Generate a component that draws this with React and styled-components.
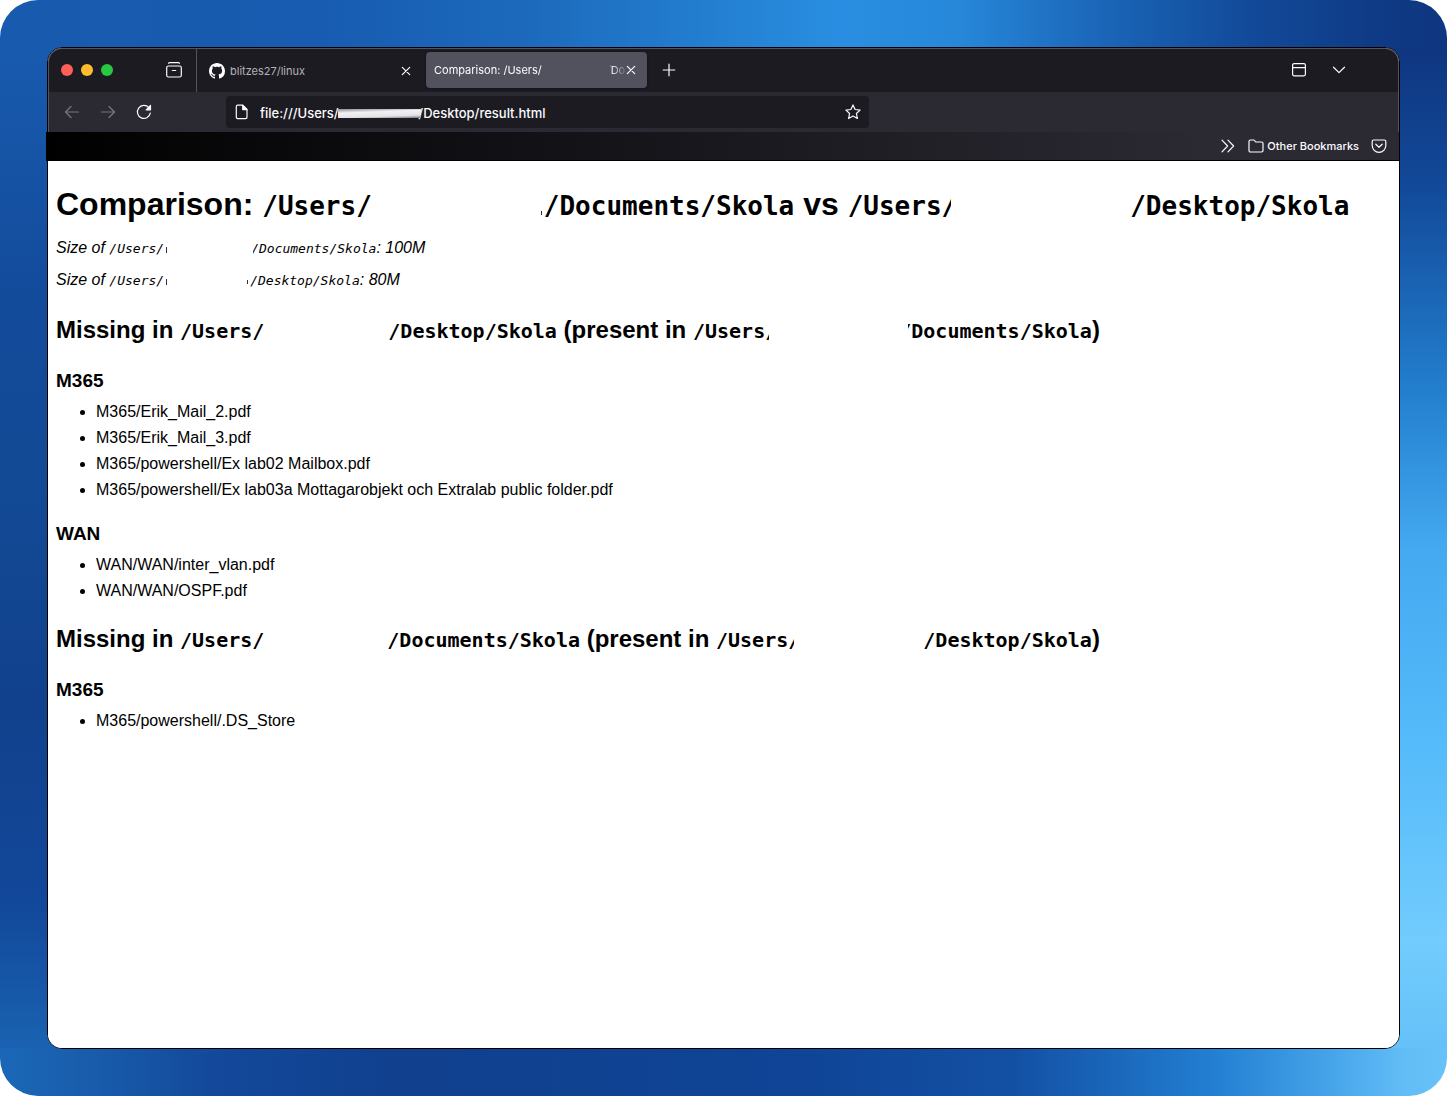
import React from "react";
import styled, { createGlobalStyle, css } from "styled-components";

const GlobalStyle = createGlobalStyle`
  *, *::before, *::after { box-sizing: border-box; }
  body { margin: 0; background: #fff; }
`;

const uiFont = `Inter, "Liberation Sans", sans-serif`;

const Wallpaper = styled.div`
  display: flex;
  min-height: 100vh;
  padding: 47px;
  border-radius: 38px;
  background:
    linear-gradient(90deg, #185aae 0%, #175cb0 22%, #1c69bb 36%, #2480d2 50%, #298ee1 58%, #2788da 66%, #1b66b8 76%, #124b9a 86%, #0f3a85 95%, #0f3680 100%) top / 100% 48px no-repeat,
    linear-gradient(90deg, #1b67b7 0%, #195fae 5%, #13489a 15%, #10408e 28%, #0f4496 55%, #1350a4 70%, #1a67bb 77%, #237fd2 84%, #46a4ea 92%, #62bdf6 97%, #66c2f8 100%) bottom / 100% 48px no-repeat,
    linear-gradient(180deg, #185aae 0%, #185aae 5%, #134b9b 27%, #134a95 45%, #11418c 64%, #124799 82%, #1a63b2 96%, #1a63b2 100%) left / 50% 100% no-repeat,
    linear-gradient(180deg, #0f3680 0%, #0f3781 5%, #124999 17%, #1a63b3 26%, #2380cf 36%, #44a9f0 50%, #55bbfa 68%, #72ccfd 86%, #64c0f7 96%, #64c0f7 100%) right / 50% 100% no-repeat;
`;

const Window = styled.div`
  flex: 1;
  min-width: 0;
  display: flex;
  flex-direction: column;
  border: 1px solid #000;
  border-radius: 15px;
  background: #fff;
`;

const TabBar = styled.header`
  display: flex;
  align-items: stretch;
  height: 44px;
  background: #1c1b22;
  border: 1px solid #55545c;
  border-bottom: 0;
  border-radius: 14px 14px 0 0;
  font-family: ${uiFont};
  font-size: 11px;
  color: #fbfbfe;
`;

const Lights = styled.div`
  display: flex;
  align-items: center;
  gap: 8px;
  padding: 0 38px 2px 12px;
`;

const Light = styled.button`
  width: 12px;
  height: 12px;
  padding: 0;
  border: 0;
  border-radius: 50%;
  background: ${(p) => p.$color};
`;

const IconButton = styled.button`
  flex: none;
  display: flex;
  align-items: center;
  justify-content: center;
  width: ${(p) => p.$width || 36}px;
  padding: 0;
  border: 0;
  background: none;
  color: ${(p) => (p.$dim ? "#77767d" : "#fbfbfe")};

  ${TabBar} > & { padding-bottom: 2px; }
`;

const Tab = styled.div`
  display: flex;
  align-items: center;
  gap: 5px;
  ${(p) =>
    p.$active
      ? css`
          width: 221px;
          margin: 3px 4px 4px 0;
          padding: 0 4px 0 8px;
          border-radius: 4px;
          background: #52525e;
          box-shadow: 0 0 3px rgba(0, 0, 0, 0.5);
        `
      : css`
          width: 230px;
          padding: 0 8px 0 12px;
          border-left: 1px solid #55545c;
          color: #b4b3b9;
        `}
`;

const TabTitle = styled.span`
  flex: 1;
  min-width: 0;
  overflow: hidden;
  white-space: nowrap;
  line-height: 16px;
`;

const FadedTitle = styled(TabTitle)`
  margin-right: -12px;
  mask-image: linear-gradient(90deg, #000 92%, rgba(0, 0, 0, 0.2) 99%);
`;

const TabGap = styled.span`
  position: relative;
  display: inline-block;
  width: 68px;
  height: 16px;
  margin-right: -3px;
  vertical-align: top;
  background: #52525e;
`;

const Spacer = styled.div`
  flex: 1;
`;

const NavBar = styled.nav`
  display: flex;
  align-items: center;
  height: 40px;
  padding: 0 5px;
  background: #2b2a33;
  border: solid #55545c;
  border-width: 0 1px;
`;

const AddressBar = styled.form`
  position: relative;
  display: flex;
  align-items: center;
  flex: 0 1 643px;
  height: 32px;
  margin-left: 64px;
  padding-left: 8px;
  border-radius: 4px;
  background: #1c1b22;
  color: #fbfbfe;
`;

const AddressInput = styled.input`
  flex: 1;
  min-width: 0;
  margin-left: 10px;
  padding: 2px 0 0;
  border: 0;
  outline: 0;
  background: none;
  color: inherit;
  font-family: ${uiFont};
  font-size: 13px;
  font-weight: 500;
  line-height: 20px;
`;

const AddressSmudge = styled.span`
  position: absolute;
  left: 112px;
  top: 13px;
  width: 83px;
  height: 9px;
  background: linear-gradient(178deg, #8d8c92 0%, #f1f1f4 35%, #e4e4e8 75%, #77767d 100%);
`;

const BookmarksBar = styled.div`
  display: flex;
  align-items: center;
  height: 29px;
  margin-left: -2px;
  padding-right: 6px;
  border-bottom: 1px solid #000;
  background: linear-gradient(90deg, #000 0%, #050506 8%, #141318 40%, #212027 65%, #2b2a33 86%);
  color: #fbfbfe;
`;

const BookmarkFolder = styled.button`
  display: flex;
  align-items: center;
  gap: 3px;
  padding: 0 6px;
  border: 0;
  background: none;
  color: inherit;
  font-family: ${uiFont};
  font-size: 11px;
  font-weight: 500;
  line-height: 16px;
`;

const Page = styled.main`
  flex: 1;
  padding: 19px 8px 8px;
  border-radius: 0 0 14px 14px;
  background: #fff;
  color: #000;
  font-family: "Liberation Sans", Arial, sans-serif;
  font-size: 16px;
  line-height: 26px;
`;

const Title = styled.h1`
  margin: 0 0 4px;
  font-size: 32px;
  line-height: 48px;
`;

const SizeLine = styled.p`
  margin: 0;
  font-style: italic;
  line-height: 32px;
`;

const SectionTitle = styled.h2`
  margin: 18px 0 23px;
  font-size: 24px;
  line-height: 32px;
`;

const GroupTitle = styled.h3`
  margin: 0;
  font-size: 19px;
  line-height: 24px;
`;

const FileList = styled.ul`
  margin: 6px 0 19px;
  padding-left: 40px;
`;

const Path = styled.code`
  font-family: "DejaVu Sans Mono", monospace;
  font-size: 13px;
  line-height: 1;

  ${Title} & { font-size: 26px; }
  ${SectionTitle} & { font-size: 20px; }
`;

/* White block hiding the user name; it may bite into the letters beside it,
   and may leave a speck of the hidden name at either end. */
const Redaction = styled.span`
  position: relative;
  display: inline-block;
  width: ${(p) => p.$width}px;
  height: 1em;
  margin-left: ${(p) => -(p.$biteLeft || 0)}px;
  margin-right: ${(p) => -(p.$biteRight || 0)}px;
  vertical-align: text-bottom;
  background: #fff;

  &::before,
  &::after {
    position: absolute;
    bottom: 3px;
    width: 1px;
    background: #333;
  }
  &::before {
    content: ${(p) => (p.$speckLeft ? '""' : "none")};
    left: 2px;
    height: 6px;
  }
  &::after {
    content: ${(p) => (p.$speckRight ? '""' : "none")};
    right: 2px;
    bottom: ${(p) => p.$speckRight}px;
    height: 4px;
  }
`;

const Icon = ({ size = 16, children }) => (
  <svg width={size} height={size} viewBox="0 0 16 16" fill="none" stroke="currentColor" strokeWidth="1.2" strokeLinecap="round" strokeLinejoin="round" aria-hidden="true">
    {children}
  </svg>
);

const CloseIcon = () => (
  <Icon><path d="M4.300 4.300l7.400 7.400M11.700 4.300l-7.400 7.400" /></Icon>
);

const GitHubIcon = () => (
  <svg width="16" height="16" viewBox="0 0 16 16" fill="#fff" aria-hidden="true">
    <path d="M8 0C3.58 0 0 3.58 0 8c0 3.54 2.29 6.53 5.47 7.59.4.07.55-.17.55-.38 0-.19-.01-.82-.01-1.49-2.01.37-2.53-.49-2.69-.94-.09-.23-.48-.94-.82-1.13-.28-.15-.68-.52-.01-.53.63-.01 1.08.58 1.23.82.72 1.21 1.87.87 2.33.66.07-.52.28-.87.51-1.07-1.78-.2-3.64-.89-3.64-3.95 0-.87.31-1.59.82-2.15-.08-.2-.36-1.02.08-2.12 0 0 .67-.21 2.2.82.64-.18 1.32-.27 2-.27s1.36.09 2 .27c1.53-1.04 2.2-.82 2.2-.82.44 1.1.16 1.92.08 2.12.51.56.82 1.27.82 2.15 0 3.07-1.87 3.75-3.65 3.95.29.25.54.73.54 1.48 0 1.07-.01 1.93-.01 2.2 0 .21.15.46.55.38A8.01 8.01 0 0016 8c0-4.42-3.58-8-8-8z" />
  </svg>
);

const missingOnDesktop = [
  {
    name: "M365",
    files: [
      "M365/Erik_Mail_2.pdf",
      "M365/Erik_Mail_3.pdf",
      "M365/powershell/Ex lab02 Mailbox.pdf",
      "M365/powershell/Ex lab03a Mottagarobjekt och Extralab public folder.pdf",
    ],
  },
  { name: "WAN", files: ["WAN/WAN/inter_vlan.pdf", "WAN/WAN/OSPF.pdf"] },
];

const missingInDocuments = [{ name: "M365", files: ["M365/powershell/.DS_Store"] }];

const Groups = ({ groups }) =>
  groups.map((group) => (
    <React.Fragment key={group.name}>
      <GroupTitle>{group.name}</GroupTitle>
      <FileList>
        {group.files.map((file) => (
          <li key={file}>{file}</li>
        ))}
      </FileList>
    </React.Fragment>
  ));

const UserPath = ({ folder, ...redaction }) => (
  <Path>
    /Users/
    <Redaction {...redaction} />
    {folder}
  </Path>
);

const address = "file:///Users/" + "\u00a0".repeat(23) + "/Desktop/result.html";

export default function App() {
  return (
    <>
      <GlobalStyle />
      <Wallpaper>
        <Window>
          <TabBar>
            <Lights>
              <Light $color="#ff5f57" aria-label="Close window" />
              <Light $color="#febc2e" aria-label="Minimize window" />
              <Light $color="#28c840" aria-label="Zoom window" />
            </Lights>
            <IconButton $width={45} aria-label="Recent browsing">
              <Icon>
                <path d="M2.600 1.300C2.800.8 3.200.6 3.700.6h8.600c.5 0 .9.2 1.100.7" />
                <rect x=".7" y="4" width="14.600" height="11" rx="1.800" />
                <path d="M6.300 8.500h3.400" />
              </Icon>
            </IconButton>
            <Tab>
              <GitHubIcon />
              <TabTitle>blitzes27/linux</TabTitle>
              <IconButton $width={24} aria-label="Close tab"><CloseIcon /></IconButton>
            </Tab>
            <Tab $active>
              <FadedTitle>Comparison: /Users/<TabGap />/Do</FadedTitle>
              <IconButton $width={24} aria-label="Close tab"><CloseIcon /></IconButton>
            </Tab>
            <IconButton aria-label="New tab">
              <Icon><path d="M8 2.200v11.600M2.200 8h11.600" /></Icon>
            </IconButton>
            <Spacer />
            <IconButton $width={40} aria-label="Show tabs">
              <Icon>
                <rect x="1.600" y="1.600" width="12.800" height="12.200" rx="1.500" />
                <path d="M1.600 5.600h12.800" />
              </Icon>
            </IconButton>
            <IconButton $width={40} aria-label="List all tabs">
              <Icon><path d="M2.500 5.200L8 10.600l5.500-5.400" /></Icon>
            </IconButton>
            <IconButton $width={39} aria-hidden="true" tabIndex={-1} />
          </TabBar>
          <NavBar>
            <IconButton $dim aria-label="Back">
              <Icon><path d="M14.500 8h-13M7 2.500L1.500 8 7 13.500" /></Icon>
            </IconButton>
            <IconButton $dim aria-label="Forward">
              <Icon><path d="M1.500 8h13M9 2.500L14.500 8 9 13.500" /></Icon>
            </IconButton>
            <IconButton aria-label="Reload">
              <Icon>
                <path d="M14.300 9.200A6.500 6.500 0 1 1 12.800 3.600" />
                <path d="M14.500 1.500v4.300h-4.300z" fill="currentColor" />
              </Icon>
            </IconButton>
            <AddressBar onSubmit={(e) => e.preventDefault()}>
              <Icon>
                <path d="M3.700 1.200h5.100l4.200 4.200v7.900c0 .8-.6 1.400-1.400 1.400H3.700c-.8 0-1.400-.6-1.400-1.400V2.600c0-.8.6-1.400 1.400-1.400z" />
                <path d="M8.700 1.400v4.200h4.200z" fill="currentColor" />
              </Icon>
              <AddressInput type="text" aria-label="Address" defaultValue={address} />
              <AddressSmudge />
              <IconButton type="button" $width={32} aria-label="Bookmark this page">
                <Icon>
                  <path d="M8 .9l2.100 4.600 5 .6-3.700 3.400 1 5L8 12l-4.400 2.500 1-5L.9 6.100l5-.6z" />
                </Icon>
              </IconButton>
            </AddressBar>
          </NavBar>
          <BookmarksBar>
            <Spacer />
            <IconButton $width={28} aria-label="More bookmarks">
              <Icon><path d="M2 2.200L7.600 8 2 13.800M8 2.200L13.600 8 8 13.800" /></Icon>
            </IconButton>
            <BookmarkFolder>
              <Icon>
                <path d="M1 3.400c0-.8.6-1.400 1.400-1.400h3.200c.4 0 .8.200 1 .5L7.700 4h5.900c.8 0 1.400.6 1.400 1.400v7.200c0 .8-.6 1.400-1.400 1.400H2.400C1.600 14 1 13.400 1 12.600z" />
              </Icon>
              Other Bookmarks
            </BookmarkFolder>
            <IconButton $width={28} aria-label="Save to Pocket">
              <Icon>
                <path d="M2.600 2h10.800c.8 0 1.400.6 1.400 1.400v4.200a6.800 6.800 0 0 1-13.600 0V3.400c0-.8.6-1.400 1.400-1.400z" />
                <path d="M4.800 6.200L8 9.300l3.200-3.100" />
              </Icon>
            </IconButton>
          </BookmarksBar>
          <Page>
            <Title>
              Comparison: <UserPath $width={172} $speckRight={6} folder="/Documents/Skola" /> vs{" "}
              <UserPath $width={179} $biteLeft={6} folder="/Desktop/Skola" />
            </Title>
            <SizeLine>
              Size of <UserPath $width={89} $biteRight={2} $speckLeft folder="/Documents/Skola" />: 100M
            </SizeLine>
            <SizeLine>
              Size of <UserPath $width={86} $speckLeft $speckRight={4} folder="/Desktop/Skola" />: 80M
            </SizeLine>
            <SectionTitle>
              Missing in <UserPath $width={124} folder="/Desktop/Skola" /> (present in{" "}
              <UserPath $width={139} $biteLeft={8} $biteRight={9} folder="/Documents/Skola" />)
            </SectionTitle>
            <Groups groups={missingOnDesktop} />
            <SectionTitle>
              Missing in <UserPath $width={123} folder="/Documents/Skola" /> (present in{" "}
              <UserPath $width={129} $biteLeft={6} folder="/Desktop/Skola" />)
            </SectionTitle>
            <Groups groups={missingInDocuments} />
          </Page>
        </Window>
      </Wallpaper>
    </>
  );
}
